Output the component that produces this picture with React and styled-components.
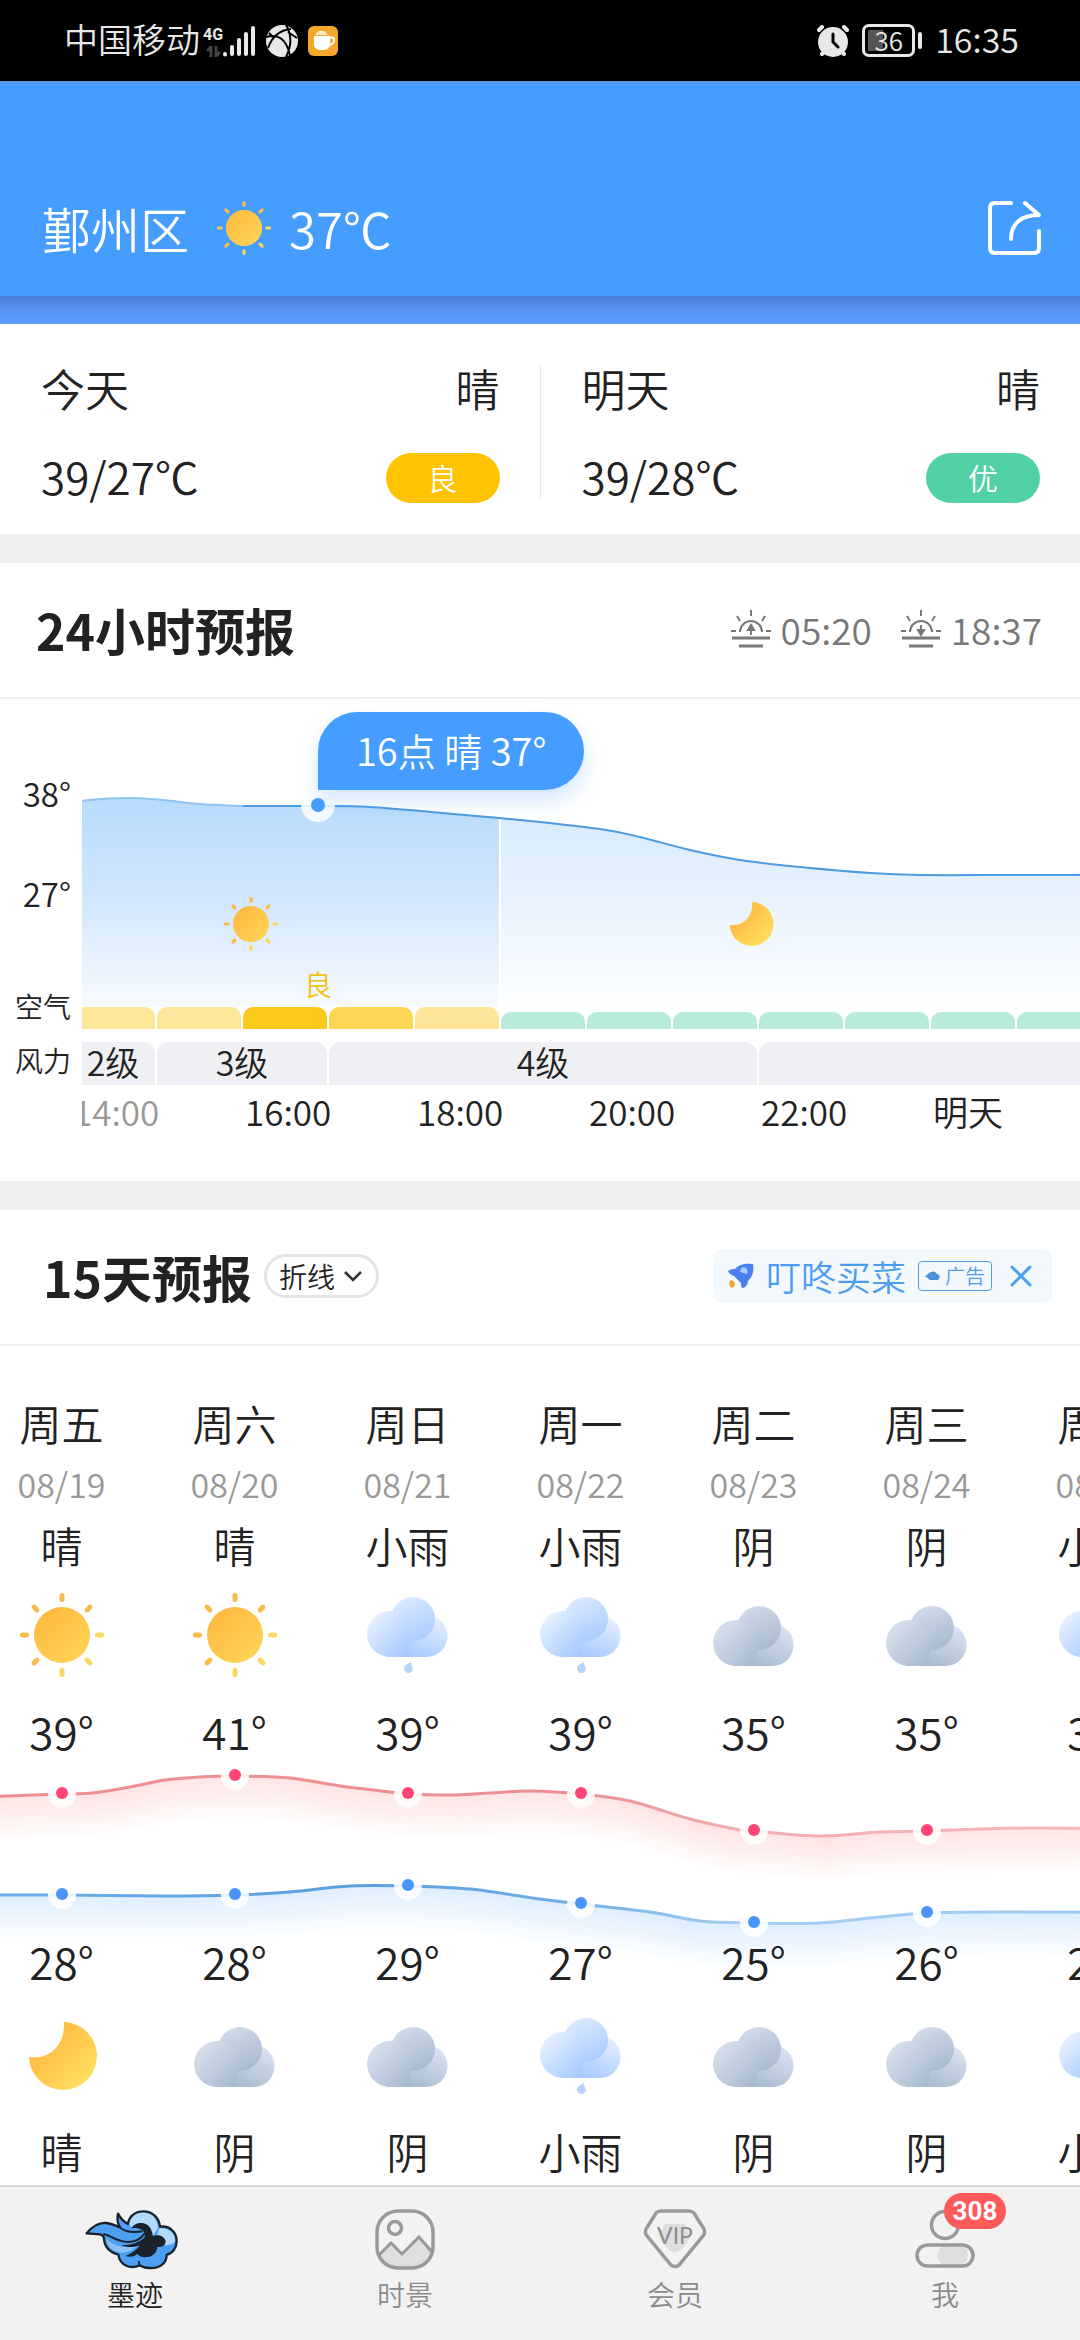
import React, { useState } from 'react';
import styled, { createGlobalStyle } from 'styled-components';

const GlobalStyle = createGlobalStyle`
  * { box-sizing: border-box; }
  body {
    margin: 0;
    background: #f0f0f0;
    color: #222;
    font-family: "Noto Sans CJK SC", "Noto Sans", sans-serif;
    font-weight: 350;
  }
  button, select {
    font: inherit;
    color: inherit;
    border: none;
    background: none;
    padding: 0;
    cursor: pointer;
  }
  a { color: inherit; text-decoration: none; }
  h2, p { margin: 0; }
  svg { display: block; flex: none; }
`;

const Page = styled.div`
  display: flex;
  flex-direction: column;
  min-height: 100vh;
  overflow: hidden;
`;

// ---------- status bar ----------

const StatusBar = styled.div`
  display: flex;
  justify-content: space-between;
  align-items: center;
  height: 81px;
  padding: 0 61px 0 64px;
  background: #000;
  color: #e8e8e8;
  font-size: 34px;
  line-height: 40px;
`;

const StatusGroup = styled.div`
  display: flex;
  align-items: center;
  gap: ${({ $gap }) => $gap}px;
`;

const StatusText = styled.span`
  padding-bottom: 3px;
`;

const Network = styled.div`
  display: flex;
  align-items: flex-end;
  margin-left: -6px;
`;

const NetworkType = styled.div`
  display: flex;
  flex-direction: column;
  align-items: center;
  gap: 4px;
  width: 18px;
  font-family: Roboto, sans-serif;
  font-size: 16px;
  font-weight: 700;
  line-height: 15px;
`;

const Battery = styled.div`
  display: flex;
  align-items: center;
  gap: 3px;
  &::after {
    content: '';
    width: 4px;
    height: 17px;
    border-radius: 2px;
    background: #e8e8e8;
  }
`;

const BatteryLevel = styled.div`
  width: 53px;
  height: 33px;
  border: 3px solid #e8e8e8;
  border-radius: 7px;
  background: linear-gradient(90deg, #555 36%, transparent 36%) content-box;
  padding: 3px;
  font-size: 26px;
  line-height: 20px;
  text-align: center;
`;

// ---------- header ----------

const Header = styled.header`
  display: flex;
  align-items: center;
  height: 215px;
  padding: 77px 37px 0 42px;
  background: #459dff;
  border-top: 2px solid #6095e5;
  color: #fff;
  font-size: 49px;
  line-height: 60px;
`;

const City = styled.button`
  margin-right: 26px;
`;

const HeaderTemp = styled.span`
  flex: 1;
  margin-left: 16px;
`;

const HeaderShade = styled.div`
  height: 28px;
  background: linear-gradient(180deg, #4c7fd6, #5996fa 60%, #5f9cff);
`;

// ---------- today / tomorrow ----------

const TwoDays = styled.section`
  display: flex;
  height: 210px;
  padding: 41px 0 35px;
  background: #fff;
  font-size: 44px;
`;

const DayCard = styled.div`
  flex: 1;
  display: flex;
  flex-direction: column;
  gap: 38px;
  padding: 0 40px 0 41px;
  & + & {
    border-left: 1px solid #e6e6e6;
  }
`;

const DayLine = styled.div`
  display: flex;
  justify-content: space-between;
  align-items: center;
  height: 50px;
  line-height: 50px;
`;

const DayValue = styled.span`
  padding-bottom: 5px;
`;

const Quality = styled.span`
  width: 114px;
  height: 50px;
  border-radius: 25px;
  background: ${({ $color }) => $color};
  color: #fff;
  font-size: 30px;
  line-height: 48px;
  text-align: center;
`;

// ---------- sections ----------

const Section = styled.section`
  flex: ${({ $grow }) => ($grow ? '1 0 auto' : 'none')};
  margin-top: 29px;
  background: #fff;
`;

const SectionHead = styled.div`
  display: flex;
  align-items: center;
  height: 136px;
  padding: 0 28px 2px ${({ $left }) => $left}px;
  border-bottom: 2px solid #f0f0f0;
`;

const Title = styled.h2`
  font-size: 50px;
  font-weight: 700;
  line-height: 60px;
`;

const SunTimes = styled.div`
  display: flex;
  gap: 28px;
  margin-left: auto;
  padding-right: 10px;
  color: #777;
  font-size: 37px;
  line-height: 44px;
`;

const SunTime = styled.span`
  display: flex;
  align-items: center;
  gap: 9px;
`;

// ---------- 24h chart ----------

const HourChart = styled.div`
  display: flex;
  height: 482px;
`;

const Axis = styled.div`
  flex: none;
  width: 82px;
  padding: 75px 11px 0 0;
  text-align: right;
`;

const AxisLabel = styled.div`
  height: 40px;
  margin-bottom: ${({ $after }) => $after}px;
  font-size: ${({ $small }) => ($small ? 28 : 33)}px;
  line-height: 38px;
`;

const Scroller = styled.div`
  flex: 1;
  min-width: 0;
  overflow: hidden;
`;

const HourStrip = styled.div`
  position: relative;
  width: 1118px;
  margin-left: -11px;
`;

const HourRow = styled.div`
  display: flex;
  align-items: flex-end;
  gap: 2px;
`;

const AirBar = styled.div`
  width: 84px;
  height: ${({ $good }) => ($good ? 17 : 22)}px;
  border-radius: 10px 10px 0 0;
  background: ${({ $color }) => $color};
`;

const WindBar = styled.div`
  width: ${({ $hours }) => $hours * 86 - 2}px;
  height: 43px;
  margin-top: 13px;
  border-radius: 12px 12px 0 0;
  background: #eff0f3;
  font-size: 34px;
  line-height: 40px;
  text-align: center;
`;

const HourLabel = styled.div`
  width: 172px;
  padding: 6px 0 0 2px;
  margin-right: -2px;
  color: ${({ $past }) => ($past ? '#999' : '#222')};
  font-size: 35px;
  line-height: 40px;
`;

const Tooltip = styled.div`
  position: absolute;
  left: 247px;
  top: 13px;
  height: 78px;
  padding: 0 38px;
  border-radius: 39px 39px 39px 0;
  background: #459dff;
  box-shadow: 0 10px 20px rgba(69, 157, 255, 0.25);
  color: #fff;
  font-size: 38px;
  line-height: 76px;
  white-space: nowrap;
`;

// ---------- 15 days ----------

const ModePicker = styled.label`
  display: flex;
  align-items: center;
  gap: 9px;
  height: 44px;
  margin-left: 12px;
  padding: 0 14px 0 12px;
  border: 3px solid #e4e4e4;
  border-radius: 22px;
`;

const ModeSelect = styled.select`
  appearance: none;
  width: 56px;
  font-size: 28px;
  line-height: 38px;
`;

const Ad = styled.div`
  display: flex;
  align-items: center;
  height: 54px;
  margin-left: auto;
  padding: 0 20px 0 15px;
  border-radius: 10px;
  background: #f3f8fd;
  color: #4b9df0;
`;

const AdLink = styled.a`
  display: flex;
  align-items: center;
  gap: 12px;
  font-size: 35px;
  line-height: 50px;
`;

const AdTag = styled.span`
  display: flex;
  align-items: center;
  gap: 5px;
  height: 30px;
  padding: 0 6px;
  border: 1px solid #4b9de0;
  border-radius: 4px;
  font-size: 20px;
  line-height: 26px;
`;

const AdClose = styled.button`
  margin-left: 18px;
`;

const DayStrip = styled.div`
  width: 1211px;
  margin-left: -25px;
  padding-top: 46px;
`;

const DayGrid = styled.div`
  display: grid;
  grid-template-columns: repeat(7, 173px);
`;

const DayCell = styled.div`
  display: flex;
  flex-direction: column;
  align-items: center;
`;

const DayText = styled.span`
  color: ${({ $date }) => ($date ? '#999' : '#222')};
  font-size: ${({ $date }) => ($date ? 34 : 42)}px;
  line-height: 61px;
`;

const DayTemp = styled.span`
  font-size: 44px;
  line-height: 60px;
`;

const IconSlot = styled.div`
  padding: ${({ $pad }) => $pad};
`;

const Trend = styled.div`
  padding-top: 6px;
`;

// ---------- tabs ----------

const TabBar = styled.nav`
  display: flex;
  flex: none;
  height: 155px;
  padding-top: 22px;
  border-top: 2px solid #d8d8d8;
  background: #f2f2f2;
`;

const Tab = styled.a`
  flex: 1;
  display: flex;
  flex-direction: column;
  align-items: center;
  gap: 5px;
  color: ${({ $active }) => ($active ? '#222' : '#8c8c8c')};
  font-size: 28px;
  line-height: 38px;
`;

const TabIcon = styled.div`
  position: relative;
`;

const Badge = styled.span`
  position: absolute;
  top: -16px;
  left: 29px;
  width: 62px;
  height: 36px;
  border-radius: 18px;
  background: #ff5a5a;
  color: #fff;
  font-family: Roboto, sans-serif;
  font-size: 26px;
  font-weight: 700;
  line-height: 36px;
  text-align: center;
`;

// Catmull-Rom spline through the points, as a bezier path
const curve = (pts) => {
  let d = `M${pts[0][0]} ${pts[0][1]}`;
  for (let i = 0; i < pts.length - 1; i++) {
    const a = pts[i - 1] || pts[i];
    const b = pts[i];
    const c = pts[i + 1];
    const e = pts[i + 2] || c;
    d += ` C${b[0] + (c[0] - a[0]) / 6} ${b[1] + (c[1] - a[1]) / 6} ${c[0] - (e[0] - b[0]) / 6} ${c[1] - (e[1] - b[1]) / 6} ${c[0]} ${c[1]}`;
  }
  return d;
};

const Sun = ({ size, x, y }) => (
  <svg width={size} height={size} x={x} y={y} viewBox="0 0 90 90">
    <defs>
      <linearGradient id="sun" x1="0" y1="0" x2="1" y2="1">
        <stop offset="0" stopColor="#ffb53c" />
        <stop offset="1" stopColor="#ffd75a" />
      </linearGradient>
    </defs>
    <circle cx="45" cy="45" r="28" fill="url(#sun)" />
    {[0, 45, 90, 135, 180, 225, 270, 315].map((deg) => (
      <rect
        key={deg}
        x="42.500"
        y="3"
        width="5"
        height="9"
        rx="2.5"
        fill={deg > 45 && deg < 225 ? '#fbd560' : '#f8bb4c'}
        transform={`rotate(${deg} 45 45)`}
      />
    ))}
  </svg>
);

const Moon = ({ size, x, y }) => (
  <svg width={size} height={size} x={x} y={y} viewBox="0 0 90 90">
    <defs>
      <linearGradient id="moon" x1="0" y1="0" x2="1" y2="1">
        <stop offset="0.2" stopColor="#ffb83e" />
        <stop offset="0.8" stopColor="#ffdb5e" />
      </linearGradient>
    </defs>
    <path d="M47 11 A34 34 0 1 1 12 46 C34 49 48 33 47 11 Z" fill="url(#moon)" />
  </svg>
);

const Cloud = ({ rain }) => {
  const id = rain ? 'rain' : 'gray';
  const [light, mid, dark] = rain ? ['#eff5ff', '#bfd9ff', '#a3c8ff'] : ['#dde3ef', '#bdcbdd', '#a7b9cd'];
  return (
    <svg width="90" height="90" viewBox="0 0 90 90">
      <defs>
        <linearGradient id={`${id}Top`} x1="0.2" y1="0" x2="0.7" y2="1">
          <stop offset="0" stopColor={rain ? '#deebff' : '#d3dcec'} />
          <stop offset="1" stopColor={rain ? '#a9ccff' : '#a9bace'} />
        </linearGradient>
        <linearGradient id={`${id}Left`} x1="0" y1="0.1" x2="0.9" y2="1">
          <stop offset="0" stopColor={light} />
          <stop offset="0.6" stopColor={mid} />
          <stop offset="1" stopColor={dark} />
        </linearGradient>
        <linearGradient id={`${id}Right`} x1="0.8" y1="0.1" x2="0.3" y2="1">
          <stop offset="0" stopColor={rain ? '#e2edff' : '#d8e1f1'} />
          <stop offset="1" stopColor={dark} />
        </linearGradient>
      </defs>
      <g transform={rain ? 'translate(0 7)' : 'translate(0 16)'}>
        <path d="M24 60 L64 60 A21 21 0 1 0 50 23 Z" fill={`url(#${id}Right)`} />
        <circle cx="50" cy="22" r="22" fill={`url(#${id}Top)`} />
        <path d="M27 14 A23 23 0 1 0 27 60 H46 C44 54 49 48 49 37 A22 23 0 0 0 27 14 Z" fill={`url(#${id}Left)`} />
      </g>
      {rain && <path d="M48 72 C48 76 50 77 50 79 A4.5 4.5 0 0 1 41 78 C41 75 45 74 48 72 Z" fill="#b9d4fa" />}
    </svg>
  );
};

const SunHorizon = ({ down }) => (
  <svg width="42" height="40" viewBox="0 0 42 40" fill="none" stroke="#777" strokeWidth="2">
    <path d="M21 1 V7 M7 7 L10 12 M35 7 L32 12 M1 22 H6 M36 22 H41" />
    <path d="M10 23 A11 11 0 0 1 32 23" />
    <path d="M2 29 H40 M9 37 H33" strokeWidth="3" />
    {down ? (
      <path d="M21 16 V23 M18 21 L21 26 L24 21 Z" fill="#777" />
    ) : (
      <path d="M21 26 V19 M18 21 L21 16 L24 21 Z" fill="#777" />
    )}
  </svg>
);

const weatherIcon = {
  晴: () => <Sun size={90} />,
  晴夜: () => <Moon size={90} />,
  小雨: () => <Cloud rain />,
  阴: () => <Cloud />,
};

const air = [
  '#fde79b', '#fde79b', '#fcc91d', '#fcd654', '#fde69a',
  ...Array(8).fill('#b9ebdc'),
];

const wind = [
  { text: '2级', hours: 1 },
  { text: '3级', hours: 2 },
  { text: '4级', hours: 5 },
  { text: '', hours: 5 },
];

const hours = ['14:00', '16:00', '18:00', '20:00', '22:00', '明天'];

const hourPast = [[0, 103], [30, 100], [62, 99], [92, 101], [129, 105], [172, 107]];
const hourNext = [
  [172, 107], [247, 107], [299, 108], [360, 113], [428, 119], [469, 123], [535, 131], [569, 138],
  [619, 151], [669, 161], [729, 168], [799, 174], [849, 176], [949, 176], [1118, 176],
];

const days = [
  { week: '周五', date: '08/19', day: '晴', high: 39, low: 28, night: '晴' },
  { week: '周六', date: '08/20', day: '晴', high: 41, low: 28, night: '阴' },
  { week: '周日', date: '08/21', day: '小雨', high: 39, low: 29, night: '阴' },
  { week: '周一', date: '08/22', day: '小雨', high: 39, low: 27, night: '小雨' },
  { week: '周二', date: '08/23', day: '阴', high: 35, low: 25, night: '阴' },
  { week: '周三', date: '08/24', day: '阴', high: 35, low: 26, night: '阴' },
  { week: '周四', date: '08/25', day: '小雨', high: 35, low: 26, night: '小雨' },
];

const highCurve = curve([
  [0, 30], [87, 27], [118, 26], [155, 20], [190, 13], [225, 10], [260, 9], [315, 11], [365, 19],
  [415, 25], [433, 27], [480, 28], [515, 26], [555, 24], [606, 27], [655, 34], [715, 52], [765, 63],
  [779, 64], [845, 69], [905, 65], [952, 64], [1055, 61], [1211, 63],
]);
const lowCurve = curve([
  [0, 128], [87, 128], [190, 129], [260, 128], [315, 125], [375, 119], [433, 119], [495, 122],
  [565, 132], [606, 137], [675, 145], [725, 154], [779, 156], [845, 156], [895, 151], [952, 146],
  [1025, 145], [1211, 146],
]);
const highDots = [27, 9, 27, 27, 64, 64];
const lowDots = [128, 128, 119, 137, 156, 146];

const HourPlot = () => {
  const past = curve(hourPast);
  const next = curve(hourNext);
  const area = `${past} ${next.replace('M', 'L')} V308 H0 Z`;
  return (
    <svg width="1118" height="308" viewBox="0 0 1118 308">
      <defs>
        <linearGradient id="dayFill" gradientUnits="userSpaceOnUse" x1="0" y1="100" x2="0" y2="308">
          <stop offset="0" stopColor="#b8dbfd" />
          <stop offset="0.5" stopColor="#d3e7fd" />
          <stop offset="1" stopColor="#f8fbff" />
        </linearGradient>
        <linearGradient id="nightFill" gradientUnits="userSpaceOnUse" x1="0" y1="118" x2="0" y2="308">
          <stop offset="0" stopColor="#d8eafd" />
          <stop offset="1" stopColor="#fdfeff" />
        </linearGradient>
        <clipPath id="dayClip"><rect width="428" height="308" /></clipPath>
        <clipPath id="nightClip"><rect x="430" width="690" height="308" /></clipPath>
      </defs>
      <path d={area} fill="url(#dayFill)" clipPath="url(#dayClip)" />
      <path d={area} fill="url(#nightFill)" clipPath="url(#nightClip)" />
      <path d={past} fill="none" stroke="#95c3f0" strokeWidth="2" />
      <path d={next} fill="none" stroke="#4e9be0" strokeWidth="2" />
      <circle cx="247" cy="106" r="17" fill="#fff" fillOpacity="0.85" />
      <circle cx="247" cy="106" r="7" fill="#459dff" />
      <Sun size={58} x={151} y={196} />
      <Moon size={58} x={651} y={196} />
      <text x="247" y="297" textAnchor="middle" fontSize="28" fill="#f3bf1b">良</text>
    </svg>
  );
};

// soft fade below the line: the same curve stacked downwards, each copy fainter
const Fade = ({ d, color }) => (
  <g fill="none" stroke={color} strokeWidth="2">
    {Array.from({ length: 22 }, (_, i) => (
      <path key={i} d={d} transform={`translate(0 ${i * 2 + 2})`} strokeOpacity={0.22 * (1 - i / 22)} />
    ))}
  </g>
);

const TrendPlot = () => (
  <svg width="1211" height="164" viewBox="0 0 1211 164" overflow="visible">
    <defs>
      <linearGradient id="highLine" gradientUnits="userSpaceOnUse" x1="0" y1="0" x2="1100" y2="0">
        <stop offset="0" stopColor="#ef8f91" />
        <stop offset="0.55" stopColor="#ec8f92" />
        <stop offset="0.7" stopColor="#f1afb2" />
        <stop offset="1" stopColor="#f4b7bb" />
      </linearGradient>
      <linearGradient id="lowLine" gradientUnits="userSpaceOnUse" x1="0" y1="0" x2="1100" y2="0">
        <stop offset="0" stopColor="#6fb0e8" />
        <stop offset="0.35" stopColor="#5a9edd" />
        <stop offset="0.55" stopColor="#72b0e6" />
        <stop offset="0.7" stopColor="#a5d0f3" />
        <stop offset="1" stopColor="#9dcaf0" />
      </linearGradient>
    </defs>
    <Fade d={highCurve} color="#ff8a8a" />
    <Fade d={lowCurve} color="#6fb5fb" />
    <path d={highCurve} fill="none" stroke="url(#highLine)" strokeWidth="3" />
    <path d={lowCurve} fill="none" stroke="url(#lowLine)" strokeWidth="3" />
    {highDots.map((y, i) => (
      <g key={i}>
        <circle cx={87 + i * 173} cy={y} r="14" fill="#fff" fillOpacity="0.85" />
        <circle cx={87 + i * 173} cy={y - 1} r="6" fill="#ff4577" />
      </g>
    ))}
    {lowDots.map((y, i) => (
      <g key={i}>
        <circle cx={87 + i * 173} cy={y} r="14" fill="#fff" fillOpacity="0.85" />
        <circle cx={87 + i * 173} cy={y - 1} r="6" fill="#4794fa" />
      </g>
    ))}
  </svg>
);

const LogoIcon = () => (
  <svg width="100" height="61" viewBox="67 59 300 183">
    <path
      d="M72 132 C88 112 106 98 132 101 C150 103 160 110 172 114 C164 100 163 86 166 73 C174 88 184 98 196 104 C198 82 218 66 240 66 C268 65 289 84 292 112 C322 108 343 130 342 156 C342 176 330 192 312 196 C312 222 290 238 262 236 C248 236 238 232 230 228 C205 240 172 230 167 196 C140 190 124 170 124 146 C122 140 118 136 112 135 C98 133 86 134 72 132 Z"
      fill="#4c9ff3" stroke="#1a222b" strokeWidth="7" strokeLinejoin="round"
    />
    <path d="M200 106 C202 84 220 70 240 70 C266 69 284 86 286 116 L272 138 C266 118 252 106 234 106 C224 106 214 110 208 116 Z M290 117 C318 114 338 132 337 156 C330 166 318 168 306 168 L276 160 Z" fill="#b5dbfb" />
    <path d="M130 148 C160 174 190 178 226 168 C214 182 196 190 176 190 C152 188 132 170 130 148 Z" fill="#8ac0f6" />
    <path d="M206 117 C216 98 250 94 264 118 C268 126 270 134 270 141 C282 134 306 138 309 156 C309 168 298 176 284 172 C284 190 268 204 250 203 C240 206 228 200 224 193 C216 202 204 204 188 200 C208 192 222 182 232 168 C214 176 190 174 176 168 C206 168 230 160 246 144 C248 134 244 124 234 120 C226 116 216 115 206 117 Z" fill="#1a222b" />
    <path d="M122 134 C150 140 160 158 196 158 C218 158 236 148 246 132" fill="none" stroke="#1a222b" strokeWidth="6" />
    <path d="M172 114 C186 128 214 130 240 126" fill="none" stroke="#1a222b" strokeWidth="6" />
    <path d="M228 216 C230 224 231 226 230 230" fill="none" stroke="#1a222b" strokeWidth="6" />
  </svg>
);

const SceneIcon = () => (
  <svg width="60" height="61" viewBox="0 0 60 61" fill="none" stroke="#999" strokeWidth="3.500">
    <path d="M3 46 L16 34 L27 45 L44 28 L57 42 C56 54 52 59 38 59 H22 C10 59 4 56 3 46 Z" fill="#dfdfdf" stroke="none" />
    <rect x="2" y="2" width="56" height="57" rx="21" />
    <circle cx="20" cy="19" r="6.500" />
    <path d="M4 46 L16 34 L27 45 L44 28 L57 43" strokeWidth="3" />
  </svg>
);

const VipIcon = () => (
  <svg width="64" height="61" viewBox="0 0 64 61" fill="none">
    <path d="M22 15 H42 L48 25 C46 33 38 43 32 43 C26 43 18 34 16 25 Z" fill="#dedede" />
    <path
      d="M18 2 H46 C48 2 50 3 51 4 L61 20 C62 23 62 25 60 27 L36 56 C34 58 30 58 28 56 L4 27 C2 25 2 23 3 20 L13 4 C14 3 16 2 18 2 Z"
      stroke="#999" strokeWidth="3.500"
    />
    <text x="32" y="35" textAnchor="middle" fontFamily="Lato, sans-serif" fontSize="23" fontWeight="400" fill="#8c8c8c">VIP</text>
  </svg>
);

const MeIcon = () => (
  <svg width="60" height="61" viewBox="0 0 60 61" fill="none">
    <circle cx="30" cy="16" r="13.500" stroke="#999" strokeWidth="3.500" />
    <path d="M28 37 H46 A10 10 0 0 1 46 56 H28 C20 50 20 43 28 37 Z" fill="#dedede" />
    <rect x="2" y="36" width="56" height="21" rx="10.500" stroke="#999" strokeWidth="3.500" />
  </svg>
);

const tabs = [
  { name: '墨迹', href: '#weather', Icon: LogoIcon },
  { name: '时景', href: '#scene', Icon: SceneIcon },
  { name: '会员', href: '#vip', Icon: VipIcon },
  { name: '我', href: '#me', Icon: MeIcon, badge: 308 },
];

const App = () => {
  const [mode, setMode] = useState('折线');
  const [showAd, setShowAd] = useState(true);
  const [activeTab, setActiveTab] = useState('墨迹');

  return (
    <Page>
      <GlobalStyle />
      <StatusBar>
        <StatusGroup $gap={10}>
          <StatusText>中国移动</StatusText>
          <Network>
            <NetworkType>
              4G
              <svg width="15" height="11" viewBox="0 0 15 11" fill="none" stroke="#444" strokeWidth="3">
                <path d="M5 11 V1 L1 5 M10 0 V10 L14 6" />
              </svg>
            </NetworkType>
            <svg width="34" height="32" viewBox="0 0 34 32" stroke="#e8e8e8" strokeWidth="4" strokeLinecap="round">
              <path d="M3 29.500 V29 M10 29 V22 M17 29 V15 M24 29 V9 M31 29 V3" />
            </svg>
          </Network>
          <svg width="32" height="32" viewBox="0 0 32 32">
            <circle cx="16" cy="16" r="16" fill="#e8e8e8" />
            <path d="M0 12 C12 9 20 13 24 30 M2 23 C6 12 14 5 25 4 M20 0 C26 10 26 20 20 32 M8 13 L3 8 M22 7 L31 13" fill="none" stroke="#000" strokeWidth="2" />
          </svg>
          <svg width="30" height="30" viewBox="0 0 30 30">
            <rect width="30" height="30" rx="6" fill="#f5a92c" />
            <path d="M6 10 H22 V18 C22 22 19 24 14 24 C9 24 6 22 6 18 Z" fill="#fff" />
            <path d="M8 9 C9 4 17 4 19 9" fill="#ffe7bd" stroke="#fff" strokeWidth="1" />
            <path d="M21 12 C28 9 28 18 21 19" fill="none" stroke="#fff" strokeWidth="2" />
          </svg>
        </StatusGroup>
        <StatusGroup $gap={13}>
          <svg width="32" height="32" viewBox="0 0 32 32" stroke="#e8e8e8" strokeWidth="4" strokeLinecap="round">
            <circle cx="16" cy="17" r="13" fill="#e8e8e8" />
            <path d="M2 5 L5 2 M30 5 L27 2 M5 29 L7 27 M27 29 L25 27" />
            <path d="M16 9 V17 L21 22" fill="none" stroke="#000" strokeWidth="3" />
          </svg>
          <Battery><BatteryLevel>36</BatteryLevel></Battery>
          <StatusText>16:35</StatusText>
        </StatusGroup>
      </StatusBar>

      <Header>
        <City type="button">鄞州区</City>
        <Sun size={58} />
        <HeaderTemp>37℃</HeaderTemp>
        <button type="button" aria-label="分享">
          <svg width="56" height="56" viewBox="0 0 56 56" fill="none" stroke="#fff" strokeWidth="4" strokeLinecap="round" strokeLinejoin="round">
            <path d="M24 3 H8 Q3 3 3 8 V48 Q3 53 8 53 H47 Q52 53 52 48 V31" />
            <path d="M24 39 C24 23 35 15 52 15 L38 3" />
          </svg>
        </button>
      </Header>
      <HeaderShade />

      <TwoDays>
        <DayCard>
          <DayLine><DayValue>今天</DayValue><DayValue>晴</DayValue></DayLine>
          <DayLine><DayValue>39/27℃</DayValue><Quality $color="#ffc300">良</Quality></DayLine>
        </DayCard>
        <DayCard>
          <DayLine><DayValue>明天</DayValue><DayValue>晴</DayValue></DayLine>
          <DayLine><DayValue>39/28℃</DayValue><Quality $color="#52d1a6">优</Quality></DayLine>
        </DayCard>
      </TwoDays>

      <Section>
        <SectionHead $left={36}>
          <Title>24小时预报</Title>
          <SunTimes>
            <SunTime><SunHorizon />05:20</SunTime>
            <SunTime><SunHorizon down />18:37</SunTime>
          </SunTimes>
        </SectionHead>
        <HourChart>
          <Axis>
            <AxisLabel $after={60}>38°</AxisLabel>
            <AxisLabel $after={73}>27°</AxisLabel>
            <AxisLabel $small $after={14}>空气</AxisLabel>
            <AxisLabel $small $after={0}>风力</AxisLabel>
          </Axis>
          <Scroller>
            <HourStrip>
              <HourPlot />
              <HourRow>
                {air.map((color, i) => <AirBar key={i} $color={color} $good={i > 4} />)}
              </HourRow>
              <HourRow>
                {wind.map((w, i) => <WindBar key={i} $hours={w.hours}>{w.text}</WindBar>)}
              </HourRow>
              <HourRow>
                {hours.map((h, i) => <HourLabel key={h} $past={i === 0}>{h}</HourLabel>)}
              </HourRow>
              <Tooltip>16点 晴 37°</Tooltip>
            </HourStrip>
          </Scroller>
        </HourChart>
      </Section>

      <Section $grow>
        <SectionHead $left={43}>
          <Title>15天预报</Title>
          <ModePicker>
            <ModeSelect aria-label="显示方式" value={mode} onChange={(e) => setMode(e.target.value)}>
              <option value="折线">折线</option>
              <option value="列表">列表</option>
            </ModeSelect>
            <svg width="18" height="12" viewBox="0 0 18 12" fill="none" stroke="#333" strokeWidth="2.500">
              <path d="M1 2 L9 10 L17 2" />
            </svg>
          </ModePicker>
          {showAd && (
            <Ad>
              <AdLink href="#ad">
                <svg width="26" height="26" viewBox="0 0 26 26">
                  <path d="M0 8 C3 6 5 6 7 6 C11 1 18 0 25 1 C26 8 25 13 20 18 C20 21 18 24 15 25 C13 25 13 22 13 20 L6 13 C4 12 1 11 0 8 Z" fill="#4b80f0" />
                  <path d="M13 5 C17 3 21 6 19 11 L12 9 Z" fill="#a9c9ff" />
                  <path d="M2 17 C6 17 8 20 6 24 C3 26 0 23 2 17 Z" fill="#e6ac2e" />
                </svg>
                叮咚买菜
                <AdTag>
                  <svg width="15" height="10" viewBox="0 0 15 10">
                    <path d="M0 6 C4 1 9 -2 12 3 C16 4 15 9 12 9 H5 C3 9 4 6 0 6 Z" fill="#4b93d6" />
                  </svg>
                  广告
                </AdTag>
              </AdLink>
              <AdClose type="button" aria-label="关闭广告" onClick={() => setShowAd(false)}>
                <svg width="22" height="22" viewBox="0 0 22 22" stroke="#4b9df0" strokeWidth="3" strokeLinecap="round">
                  <path d="M2 2 L20 20 M20 2 L2 20" />
                </svg>
              </AdClose>
            </Ad>
          )}
        </SectionHead>
        <Scroller>
          <DayStrip>
            <DayGrid>
              {days.map((d) => (
                <DayCell key={d.date}>
                  <DayText>{d.week}</DayText>
                  <DayText $date>{d.date}</DayText>
                  <DayText>{d.day}</DayText>
                  <IconSlot $pad="15px 0 21px">{weatherIcon[d.day]()}</IconSlot>
                  <DayTemp>{d.high}°</DayTemp>
                </DayCell>
              ))}
            </DayGrid>
            <Trend><TrendPlot /></Trend>
            <DayGrid>
              {days.map((d) => (
                <DayCell key={d.date}>
                  <DayTemp>{d.low}°</DayTemp>
                  <IconSlot $pad="20px 0 19px">{weatherIcon[d.night === '晴' ? '晴夜' : d.night]()}</IconSlot>
                  <DayText>{d.night}</DayText>
                </DayCell>
              ))}
            </DayGrid>
          </DayStrip>
        </Scroller>
      </Section>

      <TabBar>
        {tabs.map(({ name, href, Icon, badge }) => (
          <Tab key={name} href={href} $active={name === activeTab} onClick={() => setActiveTab(name)}>
            <TabIcon>
              <Icon />
              {badge && <Badge>{badge}</Badge>}
            </TabIcon>
            {name}
          </Tab>
        ))}
      </TabBar>
    </Page>
  );
};

export default App;
